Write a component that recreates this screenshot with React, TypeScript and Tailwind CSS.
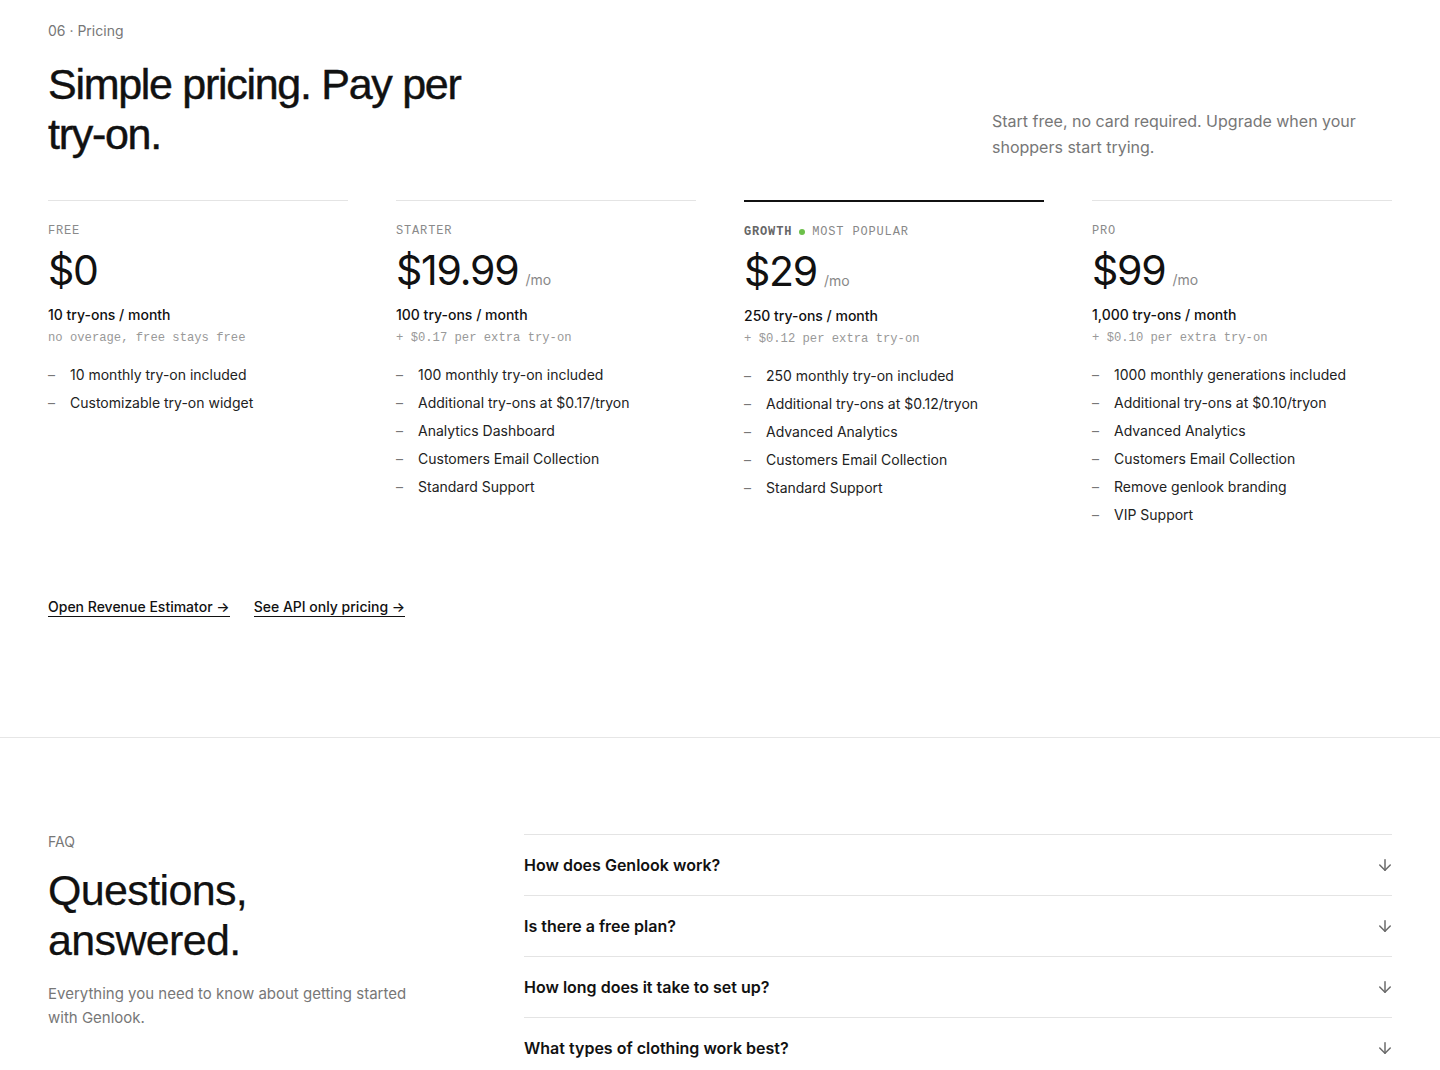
import { ArrowDown } from "lucide-react";

type Plan = {
    name: string;
    price: string;
    perMonth: boolean;
    quota: string;
    note: string;
    features: string[];
    popular?: boolean;
};

const plans: Plan[] = [
    {
        name: "FREE",
        price: "$0",
        perMonth: false,
        quota: "10 try-ons / month",
        note: "no overage, free stays free",
        features: ["10 monthly try-on included", "Customizable try-on widget"],
    },
    {
        name: "STARTER",
        price: "$19.99",
        perMonth: true,
        quota: "100 try-ons / month",
        note: "+ $0.17 per extra try-on",
        features: [
            "100 monthly try-on included",
            "Additional try-ons at $0.17/tryon",
            "Analytics Dashboard",
            "Customers Email Collection",
            "Standard Support",
        ],
    },
    {
        name: "GROWTH",
        price: "$29",
        perMonth: true,
        quota: "250 try-ons / month",
        note: "+ $0.12 per extra try-on",
        popular: true,
        features: [
            "250 monthly try-on included",
            "Additional try-ons at $0.12/tryon",
            "Advanced Analytics",
            "Customers Email Collection",
            "Standard Support",
        ],
    },
    {
        name: "PRO",
        price: "$99",
        perMonth: true,
        quota: "1,000 try-ons / month",
        note: "+ $0.10 per extra try-on",
        features: [
            "1000 monthly generations included",
            "Additional try-ons at $0.10/tryon",
            "Advanced Analytics",
            "Customers Email Collection",
            "Remove genlook branding",
            "VIP Support",
        ],
    },
];

const faqs = [
    "How does Genlook work?",
    "Is there a free plan?",
    "How long does it take to set up?",
    "What types of clothing work best?",
];

const mono = "font-['Liberation_Mono','DejaVu_Sans_Mono',monospace]";
const display = "font-['Liberation_Sans','Arial',sans-serif]";

function PlanColumn({ plan }: { plan: Plan }) {
    return (
        <div
            className={`flex flex-col pt-[22px] ${
                plan.popular ? "border-t-2 border-[#111]" : "border-t border-[#e4e4e4]"
            }`}
        >
            {/* Label */}
            <div className={`${mono} flex items-center gap-[7px] text-[12px] leading-4 tracking-[0.07em]`}>
                {plan.popular ? (
                    <>
                        <span className="font-bold text-[#666]">{plan.name}</span>
                        <span className="size-[6px] rounded-full bg-[#6cc04a]" />
                        <span className="text-[#888]">MOST POPULAR</span>
                    </>
                ) : (
                    <span className="text-[#8a8a8a]">{plan.name}</span>
                )}
            </div>
            {/* Price */}
            <div className="mt-[11px] flex items-baseline gap-[7px]">
                <span className="text-[41px] leading-10 tracking-[-0.03em] text-[#111]">
                    {plan.price}
                </span>
                {plan.perMonth && <span className="text-sm text-[#888]">/mo</span>}
            </div>
            <p className="mt-[15px] text-sm leading-5 font-medium text-[#111]">{plan.quota}</p>
            <p className={`${mono} mt-[5px] text-[12.2px] leading-4 text-[#999]`}>{plan.note}</p>
            {/* Features */}
            <ul className="mt-[19px] flex flex-col gap-2">
                {plan.features.map((f) => (
                    <li key={f} className="flex text-sm leading-5 text-[#222]">
                        <span className="w-[22px] text-[#777]">–</span>
                        {f}
                    </li>
                ))}
            </ul>
        </div>
    );
}

export default function App() {
    return (
        <div className="min-h-screen bg-white font-['Inter','Noto_Sans',sans-serif] text-[#111] antialiased">
            {/* Pricing */}
            <section className="px-12 pt-[21px] pb-[120px] border-b border-[#e6e6e6]">
                <p className="text-sm leading-5 text-[#777]">06 · Pricing</p>
                <div className="mt-[18px] flex items-end justify-between">
                    <h2
                        className={`${display} max-w-[440px] text-[43px] leading-[50px] tracking-[-0.03em] text-[#111] [-webkit-text-stroke:0.45px_#111]`}
                    >
                        Simple pricing. Pay per try-on.
                    </h2>
                    <p className="mb-[-1px] w-[400px] text-base leading-[26px] text-[#777]">
                        Start free, no card required. Upgrade when your shoppers start trying.
                    </p>
                </div>

                <div className="mt-[41px] grid grid-cols-4 gap-12">
                    {plans.map((p) => (
                        <PlanColumn key={p.name} plan={p} />
                    ))}
                </div>

                <div className="mt-[72px] flex gap-6">
                    <a href="#" className="border-b border-[#111] text-sm leading-[19px] font-medium text-[#111]">
                        Open Revenue Estimator →
                    </a>
                    <a href="#" className="border-b border-[#111] text-sm leading-[19px] font-medium text-[#111]">
                        See API only pricing →
                    </a>
                </div>
            </section>

            {/* FAQ */}
            <section className="px-12 pt-[94px] pb-16 flex gap-12">
                <div className="w-[428px]">
                    <p className="text-sm leading-5 text-[#777]">FAQ</p>
                    <h2
                        className={`${display} mt-[13px] text-[43px] leading-[50px] tracking-[-0.015em] text-[#111] [-webkit-text-stroke:0.25px_#111]`}
                    >
                        Questions,
                        <br />
                        answered.
                    </h2>
                    <p className="mt-[17px] max-w-[370px] text-[15px] leading-6 text-[#777]">
                        Everything you need to know about getting started with Genlook.
                    </p>
                </div>
                <div className="flex-1 mt-[2px]">
                    {faqs.map((q) => (
                        <div
                            key={q}
                            className="flex h-[61px] items-center justify-between border-t border-[#e4e4e4]"
                        >
                            <span className="text-base font-semibold text-[#111]">{q}</span>
                            <ArrowDown size={18} strokeWidth={2} className="-mr-[2px] text-[#6b6b6b]" />
                        </div>
                    ))}
                </div>
            </section>
        </div>
    );
}
